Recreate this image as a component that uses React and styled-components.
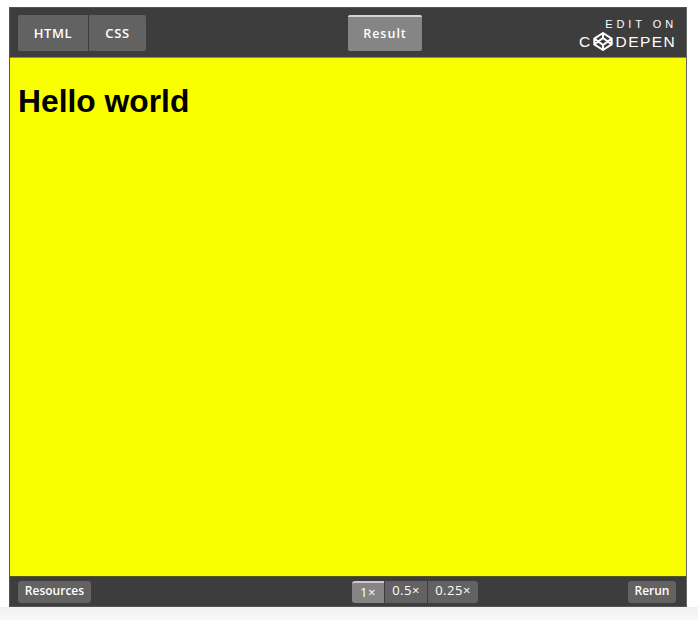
import React from "react";
import styled, { createGlobalStyle } from "styled-components";

const Global = createGlobalStyle`
  html, body { margin: 0; padding: 0; background: #ffffff; }
  body { height: 620px; overflow: hidden; font-family: "Open Sans", sans-serif; }
`;
const Page = styled.div`
  height: 620px;
  box-sizing: border-box;
  padding: 7px 11px 0 9px;
  background: linear-gradient(#fff 0, #fff 607px, #f1f1f1 607px, #f8f8f8 620px);
`;
const Frame = styled.div`
  height: 600px;
  box-sizing: border-box;
  border: 1px solid #555;
  border-right-color: #666;
  background: #3d3d3e;
  display: flex;
  flex-direction: column;
`;
const TopBar = styled.header`
  height: 50px;
  box-sizing: border-box;
  flex: none;
  display: grid;
  grid-template-columns: 330px auto 1fr;
  align-items: center;
  padding: 1px 10px 0 8px;
  border-bottom: 1px solid #8f9026;
  background: #3d3d3e;
`;
const Group = styled.div`
  display: flex;
  gap: 1px;
`;
const Tab = styled.button`
  height: 36px;
  padding: 0;
  width: ${p => p.$w}px;
  border: 0;
  border-top: ${p => (p.$active ? "2px solid #d4d4d4" : "0")};
  border-radius: ${p => p.$radius || "2px"};
  background: ${p => (p.$active ? "#858585" : "#626262")};
  color: #fff;
  font: 600 ${p => (p.$active ? "12.5px" : "13px")}/1 "Open Sans", sans-serif;
  letter-spacing: ${p => (p.$active ? "1px" : "0.6px")};
`;
const Brand = styled.div`
  justify-self: end;
  color: #fff;
  display: flex;
  flex-direction: column;
  align-items: flex-end;
  margin-top: 1px;
`;
const EditOn = styled.span`
  font: 400 11px/15px "Liberation Sans", Arial, sans-serif;
  letter-spacing: 3.9px;
  margin-right: -1px;
`;
const Wordmark = styled.span`
  display: flex;
  align-items: center;
  height: 19px;
  font: 400 15.5px/19px "Liberation Sans", Arial, sans-serif;
  letter-spacing: 1.4px;
`;
const Preview = styled.main`
  flex: 1;
  background: #faff00;
  padding: 23px 0 0 8px;
`;
const Heading = styled.h1`
  margin: 0;
  color: #000;
  font: 700 31.8px/41px "Liberation Sans", Arial, sans-serif;
`;
const BottomBar = styled.footer`
  height: 30px;
  flex: none;
  display: grid;
  grid-template-columns: 334px auto 1fr;
  align-items: center;
  padding: 0 10px 0 8px;
  border-top: 1px solid #55561f;
  box-sizing: border-box;
  background: #3d3d3e;
`;
const SmallButton = styled.button`
  height: 22px;
  width: ${p => p.$w}px;
  padding: 0 0 2px;
  border: 0;
  border-radius: 3px;
  background: #626262;
  color: #fff;
  font: 600 12px/1 "Open Sans", sans-serif;
  justify-self: ${p => (p.$end ? "end" : "start")};
`;
const Zoom = styled.button`
  height: 22px;
  width: ${p => p.$w}px;
  padding: 0 0 ${p => (p.$active ? "1px" : "2px")};
  border: 0;
  border-top: ${p => (p.$active ? "2px solid #c9c9c9" : "0")};
  border-radius: ${p => p.$radius};
  background: ${p => (p.$active ? "#858585" : "#626262")};
  color: #fff;
  font: 400 13px/1 "Open Sans", sans-serif;
  letter-spacing: 0.5px;
`;

const Logo = () => (
  <svg width="20" height="19" viewBox="0 0 20 19" fill="none" style={{ margin: "0 3px 0 1px" }}>
    <path
      d="M10 1 18.700 6.600V12.400L10 18 1.300 12.400V6.600Z M10 1V6 M10 13V18 M1.300 6.600 10 13 18.700 6.600 M1.300 12.400 10 6 18.700 12.400"
      stroke="#fff"
      strokeWidth="2"
      strokeLinejoin="round"
    />
  </svg>
);

export default function App() {
  return (
    <>
      <Global />
      <Page>
        <Frame>
          <TopBar>
            <Group>
              <Tab $w={70} $radius="2px 0 0 2px">HTML</Tab>
              <Tab $w={57} $radius="0 2px 2px 0">CSS</Tab>
            </Group>
            <Tab $active $w={74}>Result</Tab>
            <Brand>
              <EditOn>EDIT ON</EditOn>
              <Wordmark>C<Logo />DEPEN</Wordmark>
            </Brand>
          </TopBar>
          <Preview>
            <Heading>Hello world</Heading>
          </Preview>
          <BottomBar>
            <SmallButton $w={73}>Resources</SmallButton>
            <Group>
              <Zoom $active $w={32} $radius="3px 0 0 3px">1×</Zoom>
              <Zoom $w={42} $radius="0">0.5×</Zoom>
              <Zoom $w={50} $radius="0 3px 3px 0">0.25×</Zoom>
            </Group>
            <SmallButton $end $w={48}>Rerun</SmallButton>
          </BottomBar>
        </Frame>
      </Page>
    </>
  );
}
